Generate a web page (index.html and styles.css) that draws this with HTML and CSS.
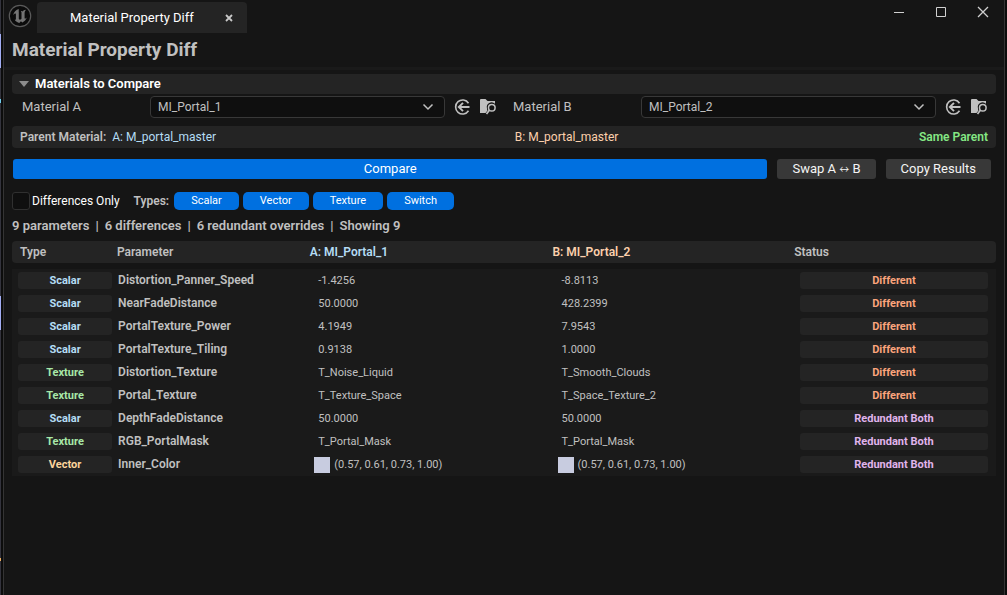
FILE: index.html
```
<!DOCTYPE html>
<html lang="en">
<head>
<meta charset="utf-8">
<title>Material Property Diff</title>
<link rel="stylesheet" href="styles.css">
</head>
<body>
<svg width="0" height="0" class="symbols" aria-hidden="true">
  <symbol id="i-chevron" viewBox="0 0 12 8"><path d="M1.500 1.500 6 6l4.500-4.500" fill="none" stroke="currentColor" stroke-width="1.500"/></symbol>
  <symbol id="i-use" viewBox="0 0 16 16"><path d="M14 4.200A7 7 0 1 0 14 11.800" fill="none" stroke="currentColor" stroke-width="1.600"/><path d="M15 8H4.500M8.500 3.800 4.300 8l4.200 4.200" fill="none" stroke="currentColor" stroke-width="1.900"/></symbol>
  <symbol id="i-browse" viewBox="0 0 17 16"><path d="M0 1q0-1 1-1h4.500l2 2H15v2.800a4.800 4.800 0 0 0-8 4.700q0 1.500.5 2L5.500 14H0z" fill="currentColor"/><circle cx="11.800" cy="8.800" r="3.300" fill="none" stroke="currentColor" stroke-width="1.500"/><path d="M9.300 11.300 6.500 15" stroke="currentColor" stroke-width="1.700"/></symbol>
</svg>
<div class="desktop">
<div class="window">
  <header class="titlebar">
    <svg class="logo" viewBox="0 0 24 24" aria-label="Unreal Engine" role="img">
      <circle cx="12" cy="12" r="10.700" fill="#0b0b0b" stroke="#5a5a5a" stroke-width="1.200"/>
      <path d="M11 5C8 5.700 5.600 8 5.200 11.200c.8-1.100 1.700-1.800 2.300-1.600.4.100.4.500.4 1v4.300c0 .7-.4 1-1.200.9 1 1.700 2.900 2.900 4.600 3.100l1.600-1.600 1.500 1.200c2-.8 3.700-2.700 4.400-4.900-.8.800-1.600 1.300-2 1-.2-.1-.2-.4-.2-.7V9c0-1.300.6-2.300 1.500-3.300-1.700.2-3 .8-3.700 1.900-.4-.5-.9-.6-1.600-.5.500.4.700.8.700 1.400v6c0 .7-.8 1.200-1.500 1.200s-1.200-.5-1.200-1.200V8.200c0-1.500-.2-2.200.200-3.200z" fill="#747474"/>
    </svg>
    <div class="tab"><span class="tab-name">Material Property Diff</span>
      <button class="tab-close" aria-label="Close tab"><svg viewBox="0 0 8 8"><path d="M1 1l6 6M7 1 1 7" stroke="#c8c8c8" stroke-width="1.800"/></svg></button>
    </div>
    <div class="controls">
      <button aria-label="Minimize"><svg viewBox="0 0 12 12"><path d="M1 6.500h10" stroke="#d0d0d0"/></svg></button>
      <button aria-label="Maximize"><svg viewBox="0 0 12 12"><path d="M1.500 1.500h9v9h-9z" fill="none" stroke="#d0d0d0"/></svg></button>
      <button aria-label="Close"><svg viewBox="0 0 12 12"><path d="M1 1l10 10M11 1 1 11" stroke="#d0d0d0" stroke-width="1.300"/></svg></button>
    </div>
  </header>
  <h1>Material Property Diff</h1>
  <main>
    <button class="section" aria-expanded="true"><svg viewBox="0 0 10 6"><path d="M0 0h10L5 6z" fill="#8c8c8c"/></svg>Materials to Compare</button>
    <div class="pickers">
      <div class="picker">
        <label for="mat-a">Material A</label>
        <span class="combo"><select id="mat-a"><option>MI_Portal_1</option></select><svg><use href="#i-chevron"/></svg></span>
        <button class="icon" aria-label="Use selected asset"><svg><use href="#i-use"/></svg></button>
        <button class="icon" aria-label="Browse to asset"><svg><use href="#i-browse"/></svg></button>
      </div>
      <div class="picker">
        <label for="mat-b">Material B</label>
        <span class="combo"><select id="mat-b"><option>MI_Portal_2</option></select><svg><use href="#i-chevron"/></svg></span>
        <button class="icon" aria-label="Use selected asset"><svg><use href="#i-use"/></svg></button>
        <button class="icon" aria-label="Browse to asset"><svg><use href="#i-browse"/></svg></button>
      </div>
    </div>
    <div class="parents">
      <span class="parent-a"><b>Parent Material:</b><span class="blue">A: M_portal_master</span></span>
      <span class="peach">B: M_portal_master</span>
      <b class="same">Same Parent</b>
    </div>
    <div class="actions">
      <button class="primary">Compare</button>
      <button>Swap A <span class="arrow">↔</span> B</button>
      <button>Copy Results</button>
    </div>
    <div class="filters">
      <label class="check"><input type="checkbox">Differences Only</label>
      <b>Types:</b>
      <div class="types"><button>Scalar</button><button>Vector</button><button>Texture</button><button>Switch</button></div>
    </div>
    <p class="stats"><span>9 parameters</span><span>|</span><span>6 differences</span><span>|</span><span>6 redundant overrides</span><span>|</span><span>Showing 9</span></p>
    <table>
      <thead><tr><th>Type</th><th>Parameter</th><th class="blue">A: MI_Portal_1</th><th class="peach">B: MI_Portal_2</th><th>Status</th></tr></thead>
      <tbody>
        <tr><td><span class="tag blue">Scalar</span></td><th scope="row">Distortion_Panner_Speed</th><td class="value"><span>-1.4256</span></td><td class="value"><span>-8.8113</span></td><td><span class="tag different">Different</span></td></tr>
        <tr><td><span class="tag blue">Scalar</span></td><th scope="row">NearFadeDistance</th><td class="value"><span>50.0000</span></td><td class="value"><span>428.2399</span></td><td><span class="tag different">Different</span></td></tr>
        <tr><td><span class="tag blue">Scalar</span></td><th scope="row">PortalTexture_Power</th><td class="value"><span>4.1949</span></td><td class="value"><span>7.9543</span></td><td><span class="tag different">Different</span></td></tr>
        <tr><td><span class="tag blue">Scalar</span></td><th scope="row">PortalTexture_Tiling</th><td class="value"><span>0.9138</span></td><td class="value"><span>1.0000</span></td><td><span class="tag different">Different</span></td></tr>
        <tr><td><span class="tag green">Texture</span></td><th scope="row">Distortion_Texture</th><td class="value"><span>T_Noise_Liquid</span></td><td class="value"><span>T_Smooth_Clouds</span></td><td><span class="tag different">Different</span></td></tr>
        <tr><td><span class="tag green">Texture</span></td><th scope="row">Portal_Texture</th><td class="value"><span>T_Texture_Space</span></td><td class="value"><span>T_Space_Texture_2</span></td><td><span class="tag different">Different</span></td></tr>
        <tr><td><span class="tag blue">Scalar</span></td><th scope="row">DepthFadeDistance</th><td class="value"><span>50.0000</span></td><td class="value"><span>50.0000</span></td><td><span class="tag redundant">Redundant Both</span></td></tr>
        <tr><td><span class="tag green">Texture</span></td><th scope="row">RGB_PortalMask</th><td class="value"><span>T_Portal_Mask</span></td><td class="value"><span>T_Portal_Mask</span></td><td><span class="tag redundant">Redundant Both</span></td></tr>
        <tr><td><span class="tag gold">Vector</span></td><th scope="row">Inner_Color</th><td class="value"><i class="swatch"></i><span>(0.57, 0.61, 0.73, 1.00)</span></td><td class="value"><i class="swatch"></i><span>(0.57, 0.61, 0.73, 1.00)</span></td><td><span class="tag redundant">Redundant Both</span></td></tr>
      </tbody>
    </table>
  </main>
</div>
</div>
</body>
</html>
```
FILE: styles.css
```
* { box-sizing: border-box; }
body { margin: 0; background: #0c0c0c; color: #c0c0c0; font: 13px/16px Roboto, sans-serif; }
button { border: 0; margin: 0; padding: 0; background: none; color: inherit; font: inherit; }
svg { display: block; }
b { font-weight: 600; }
.symbols { position: absolute; }
.desktop {
  min-height: 100vh; display: flex; padding: 0 2px 0 3px;
  background:
    linear-gradient(#33333d 34px, #a3aef5 34px 68px, #33333d 68px 99px, #6fd0f0 99px 103px, #33333d 103px 296px, #a3aef5 296px 330px, #33333d 330px 558px, #f0b060 558px 561px, #33333d 561px) 0 0 / 1px 100% no-repeat,
    #0c0c0c;
}
.window { flex: 1; min-width: 0; background: #151515; border: solid #343434; border-width: 0 1px; }
.titlebar { display: flex; align-items: flex-start; height: 33px; padding-left: 4px; }
.logo { width: 24px; height: 24px; margin: 4px 5px 0 0; }
.tab { display: flex; align-items: center; width: 210px; height: 31px; margin-top: 2px; padding: 0 13px 0 33px; background: #242424; color: #fff; border-radius: 4px 4px 0 0; }
.tab-name { flex: 1; white-space: nowrap; }
.tab-close { padding: 1px; }
.tab-close svg { width: 8px; height: 8px; }
.controls { display: flex; gap: 30px; margin: 6px 15px 0 auto; }
.controls svg { width: 12px; height: 12px; }
h1 { margin: 0; padding: 5px 8px 8px; font-size: 19px; line-height: 24px; font-weight: bold; height: 37px; border-bottom: 3px solid #1a1a1a; }
h1 + main { padding: 4px 8px 0; }
.section { display: flex; align-items: center; gap: 6px; width: 100%; height: 20px; padding: 0 7px; background: #242424; border-radius: 4px; color: #fff; font-weight: 600; }
.section svg { width: 10px; height: 6px; }
.pickers { display: grid; grid-template-columns: 1fr 1fr; gap: 16px; padding: 2px 8px 0 10px; }
.picker { display: flex; align-items: center; }
.picker label { width: 128px; }
.combo { flex: 1; display: grid; align-items: center; }
.combo select { grid-area: 1 / 1; appearance: none; width: 100%; height: 22px; padding: 0 7px; background: #0f0f0f; color: #c0c0c0; border: 1px solid #383838; border-radius: 4px; font: 12px/16px Roboto, sans-serif; }
.combo svg { grid-area: 1 / 1; justify-self: end; width: 12px; height: 8px; margin-right: 11px; pointer-events: none; }
.icon { margin-left: 9px; }
.icon svg { width: 17px; height: 16px; }
.parents { display: grid; grid-template-columns: 496fr 405fr auto; align-items: center; height: 22px; margin-top: 8px; padding: 0 8px; background: #242424; border-radius: 4px; font-size: 12px; }
.parent-a { display: flex; gap: 6px; }
.blue { color: #b4dcf4; }
.peach { color: #fcd0ac; }
.green { color: #a8e8a8; }
.gold { color: #fcd49c; }
.same { color: #84e884; }
.actions { display: flex; gap: 10px; padding: 11px 5px 0 1px; }
.actions button { height: 20px; padding: 0 15px; background: #383838; color: #f4f4f4; border-radius: 3px; white-space: nowrap; }
.actions .primary { flex: 1; background: #0070e0; color: #fff; }
.arrow { font-family: "Noto Sans CJK JP", "DejaVu Sans", sans-serif; font-size: 10px; line-height: 16px; }
.filters { display: flex; align-items: center; margin-top: 13px; font-size: 12px; }
.check { display: flex; align-items: center; gap: 2px; margin-right: 14px; color: #fff; }
.check input { appearance: none; width: 18px; height: 18px; margin: 0; background: #0f0f0f; border: 1px solid #303030; border-radius: 3px; }
.types { display: flex; gap: 4px; margin-left: 5px; }
.types button { height: 18px; padding: 0 17px; background: #0070e0; color: #fff; border-radius: 5px; font-size: 11px; }
.stats { display: flex; gap: 6px; margin: 8px 0 7px; font-weight: 600; }
table, thead, tbody { display: block; }
tr { display: grid; grid-template-columns: 97fr 193fr 243fr 242fr 194fr; align-items: center; padding: 0 8px; }
th { padding: 0; text-align: left; font-size: 12px; font-weight: 600; }
td { padding: 0; }
thead tr { height: 22px; background: #242424; border-radius: 4px; }
tbody { margin-top: 6px; background: #1a1a1a; }
tbody tr { height: 23px; padding-left: 6px; }
tbody th { padding: 0 0 2px 3px; }
td:first-child { padding-right: 3px; }
td:last-child { padding-left: 6px; }
.tag { display: block; height: 17px; background: #242424; border-radius: 3px; font-size: 11px; line-height: 17px; font-weight: bold; text-align: center; }
.different { color: #fca47c; }
.redundant { color: #e0b4ec; }
.value { display: flex; align-items: center; padding-left: 6px; font-size: 11px; }
.value span { padding-left: 4px; }
.swatch { width: 16px; height: 16px; background: #c8cce0; }
```
